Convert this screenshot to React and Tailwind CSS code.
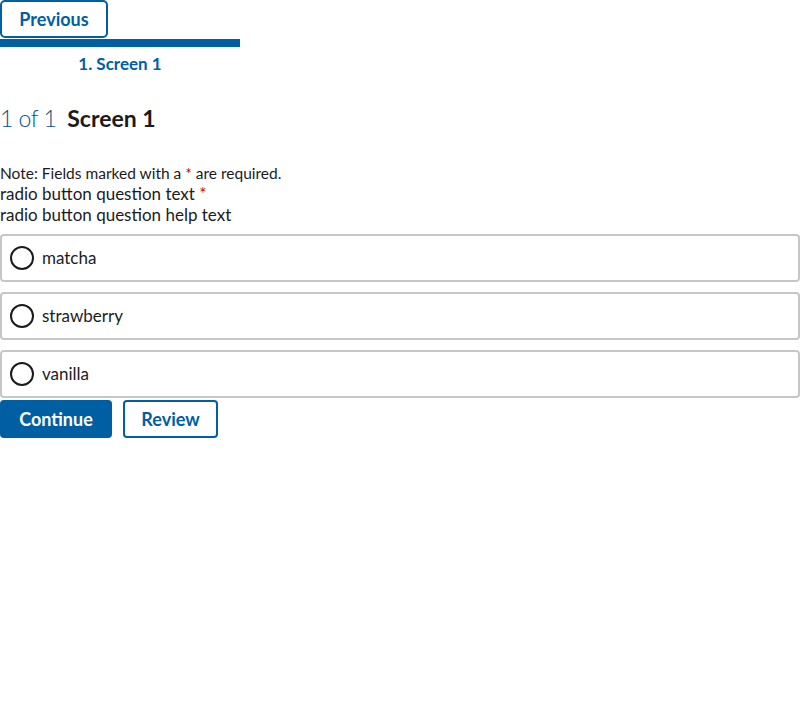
const FONT = { fontFamily: 'Lato, "Open Sans", sans-serif' }

const OPTIONS = ['matcha', 'strawberry', 'vanilla']

function RadioOption({ label }) {
	return (
		<label className="flex items-center h-12 border-2 border-[#c6c6c6] rounded-[4px] px-[8px] bg-white">
			<span className="w-6 h-6 rounded-full border-2 border-[#1b1b1b] shrink-0"></span>
			<span className="ml-2 text-[17px] text-[#1b1b1b]">{label}</span>
		</label>
	)
}

export default function App() {
	return (
		<div className="bg-white min-h-[720px] text-[#1b1b1b]" style={FONT}>
			<button className="h-[38px] w-[108px] border-2 border-[#005ea2] rounded-[5px] text-[#005ea2] font-bold text-[18px]">
				Previous
			</button>
			<div className="w-[240px]">
				<div className="h-[8px] bg-[#005ea2] mt-[1px]"></div>
				<div className="text-center text-[#005ea2] font-bold text-[17px] mt-[7px] leading-5">1. Screen 1</div>
			</div>

			<h1 className="flex items-baseline mt-[30px] leading-7">
				<span className="text-[23px] text-[#00538f] font-light tracking-[-0.5px]">1 of 1</span>
				<span className="ml-[11px] text-[23px] font-bold">Screen 1</span>
			</h1>

			<p className="mt-[31px] text-[15.5px] leading-5">
				Note: Fields marked with a <span className="text-[#b50909]">*</span> are required.
			</p>
			<div className="text-[17px] leading-[21px]">
				radio button question text <span className="text-[#b50909]">*</span>
			</div>
			<div className="text-[17px] leading-[22px]">radio button question help text</div>

			<div className="mt-[8px] flex flex-col gap-[10px] w-[800px]">
				{OPTIONS.map((o) => (
					<RadioOption key={o} label={o} />
				))}
			</div>

			<div className="flex gap-[11px] mt-[2px]">
				<button className="h-[38px] w-[112px] bg-[#005ea2] text-white font-bold rounded-[4px] text-[18px]">
					Continue
				</button>
				<button className="h-[38px] w-[95px] border-2 border-[#005ea2] text-[#005ea2] font-bold rounded-[4px] text-[18px]">
					Review
				</button>
			</div>
		</div>
	)
}
